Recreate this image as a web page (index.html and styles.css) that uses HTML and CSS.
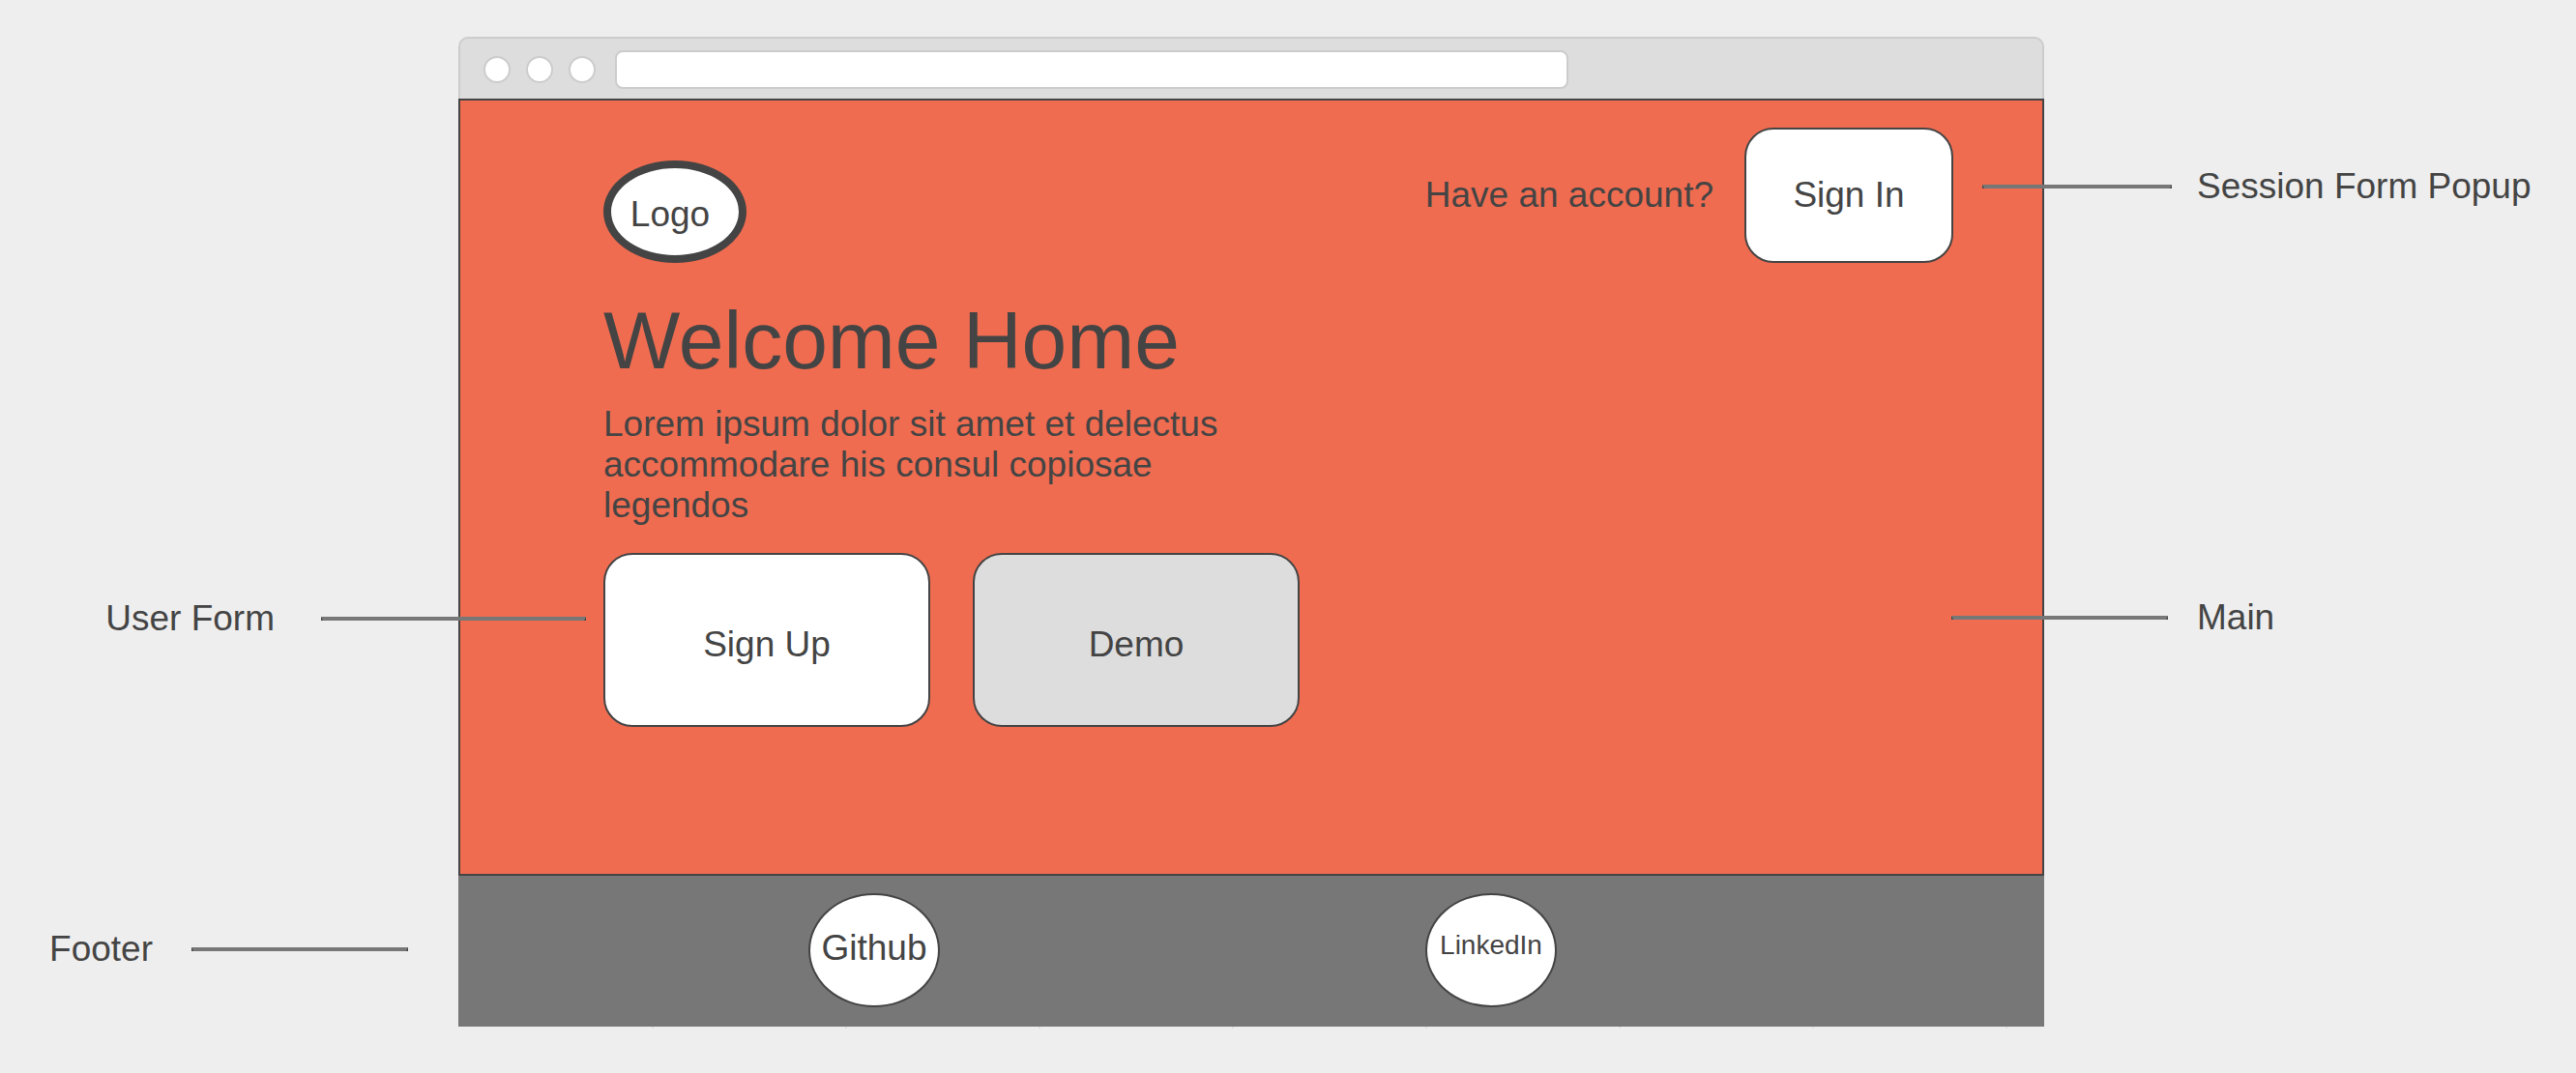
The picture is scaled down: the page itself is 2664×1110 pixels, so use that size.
FILE: index.html
```html
<!DOCTYPE html>
<html lang="en">
<head>
  <meta charset="utf-8">
  <meta name="viewport" content="width=device-width, initial-scale=1">
  <title>Splash page wireframe</title>
  <link rel="stylesheet" href="styles.css">
</head>
<body>
  <div class="board">
    <div class="chrome">
      <span class="dot"></span>
      <span class="dot"></span>
      <span class="dot"></span>
      <input class="address" type="text" aria-label="Address">
    </div>

    <main class="main">
      <header class="header">
        <a class="logo" href="#">Logo</a>
        <div class="session">
          <span>Have an account?</span>
          <button class="button button-small" type="button">Sign In</button>
        </div>
      </header>
      <h1 class="title">Welcome Home</h1>
      <p class="intro">Lorem ipsum dolor sit amet et delectus accommodare his consul copiosae legendos</p>
      <div class="actions">
        <button class="button button-large" type="button">Sign Up</button>
        <button class="button button-large button-muted" type="button">Demo</button>
      </div>
    </main>

    <footer class="footer">
      <a class="social" href="#">Github</a>
      <a class="social social-compact" href="#">LinkedIn</a>
    </footer>
    <div class="ticks"></div>

    <div class="note note-session"><span class="line"></span><span>Session Form Popup</span></div>
    <div class="note note-main"><span class="line"></span><span>Main</span></div>
    <div class="note note-user"><span>User Form</span><span class="line"></span></div>
    <div class="note note-footer"><span>Footer</span><span class="line"></span></div>
  </div>
</body>
</html>
```
FILE: styles.css
```css
:root {
  --ink: #444;
  --paper: #eee;
  --panel: #ddd;
  --edge: #ccc;
  --gray: #777;
  --accent: #ef6c50;
}

* {
  box-sizing: border-box;
}

body {
  margin: 0;
  background: var(--paper);
  color: var(--ink);
  font-family: "Liberation Sans", Arial, sans-serif;
  font-size: 37px;
  line-height: 42px;
}

a {
  color: inherit;
  text-decoration: none;
}

/* Side columns hold the notes, the middle column the browser window */
.board {
  display: grid;
  grid-template-columns: 474fr 1640fr 550fr;
  padding: 38px 0 44px;
}

.chrome {
  grid-area: 1 / 2;
  display: flex;
  align-items: center;
  gap: 16px;
  height: 64px;
  padding: 4px 24px 2px;
  border: 2px solid var(--edge);
  border-bottom: 0;
  border-radius: 10px 10px 0 0;
  background: var(--panel);
}

.dot {
  flex: none;
  width: 28px;
  height: 28px;
  border: 2px solid var(--edge);
  border-radius: 50%;
  background: #fff;
}

.address {
  flex: 0 1 986px;
  min-width: 0;
  height: 40px;
  margin-left: 4px;
  padding: 0 12px;
  border: 2px solid var(--edge);
  border-radius: 8px;
  background: #fff;
  font: inherit;
  font-size: 28px;
}

.main {
  grid-area: 2 / 2;
  padding: 28px 92px 152px 148px;
  border: 2px solid var(--ink);
  background: var(--accent);
}

.header {
  display: flex;
  align-items: flex-end;
  justify-content: space-between;
}

.logo {
  display: flex;
  align-items: center;
  justify-content: center;
  width: 148px;
  height: 106px;
  padding: 6px 10px 0 0;
  border: 8px solid var(--ink);
  border-radius: 50%;
  background: #fff;
}

.session {
  display: flex;
  align-items: center;
  gap: 32px;
}

.button {
  padding: 0;
  border: 2px solid var(--ink);
  border-radius: 30px;
  background: #fff;
  color: inherit;
  font: inherit;
}

.button-small {
  width: 216px;
  height: 140px;
}

.button-large {
  width: 338px;
  height: 180px;
  padding-top: 10px;
}

.button-muted {
  background: var(--panel);
}

.title {
  margin: 32px 0 18px;
  font-size: 84px;
  font-weight: 400;
  line-height: 96px;
}

.intro {
  max-width: 680px;
  margin: 0 0 28px;
}

.actions {
  display: flex;
  gap: 44px;
}

.footer {
  grid-area: 3 / 2;
  display: flex;
  gap: 502px;
  padding: 18px 0 20px 362px;
  background: var(--gray);
}

.social {
  display: flex;
  align-items: center;
  justify-content: center;
  width: 136px;
  height: 118px;
  padding-bottom: 4px;
  border: 2px solid var(--ink);
  border-radius: 50%;
  background: #fff;
}

.social-compact {
  padding-bottom: 10px;
  font-size: 28px;
}

/* Faint ruler marks under the window, one every 200px */
.ticks {
  grid-area: 4 / 2;
  height: 2px;
  margin-left: 2px;
  background: repeating-linear-gradient(to right, transparent 0 198px, #e0e0e0 198px 200px);
}

/* Notes: their lines reach over the edge of the window */
.note {
  z-index: 1;
  align-self: start;
  display: flex;
  align-items: center;
  white-space: nowrap;
}

.line {
  flex: none;
  width: 224px;
  height: 4px;
  border: solid var(--ink);
  border-width: 4px 2px 0;
  border-top-color: var(--gray);
}

.note-session {
  grid-area: 2 / 3;
  gap: 26px;
  margin: 70px 0 0 -64px;
}

.note-session .line {
  width: 196px;
}

.note-main {
  grid-area: 2 / 3;
  gap: 30px;
  margin: 516px 0 0 -96px;
}

.note-user {
  grid-area: 2 / 1;
  justify-self: end;
  gap: 48px;
  margin: 517px -132px 0 0;
}

.note-user .line {
  width: 274px;
}

.note-footer {
  grid-area: 3 / 1;
  align-self: center;
  justify-self: end;
  gap: 40px;
  margin: 0 52px 4px 0;
}
```
